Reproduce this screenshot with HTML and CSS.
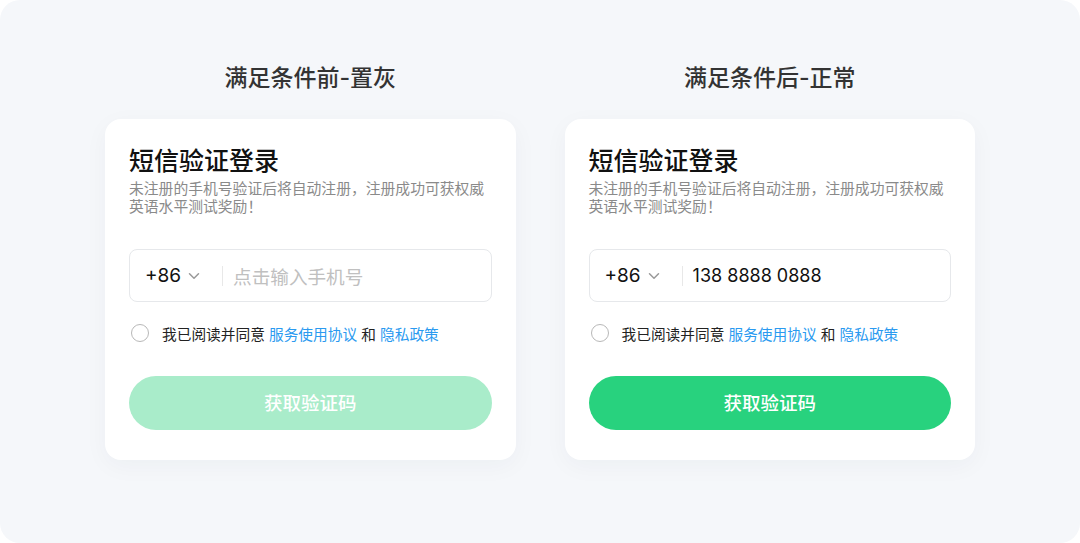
FILE: index.html
```html
<!DOCTYPE html>
<html lang="zh-CN">
<head>
    <meta charset="UTF-8">
    <meta name="viewport" content="width=device-width, initial-scale=1.0">
    <title>短信验证登录 - 按钮状态</title>
    <link rel="stylesheet" href="styles.css">
</head>
<body>

<div class="board">
    <div class="col">
        <h2 class="col-title">满足条件前-置灰</h2>
        <div class="card">
            <h1 class="card-title">短信验证登录</h1>
            <p class="card-desc">未注册的手机号验证后将自动注册，注册成功可获权威英语水平测试奖励！</p>
            <div class="phone-box">
                <span class="code">+86</span>
                <svg class="arrow" width="12" height="8" viewBox="0 0 12 8"><path d="M1.5 1.8 6 6.2 10.5 1.8" fill="none" stroke="#999" stroke-width="1.5" stroke-linecap="round" stroke-linejoin="round"/></svg>
                <span class="sep"></span>
                <span class="phone placeholder">点击输入手机号</span>
            </div>
            <div class="agree">
                <span class="radio"></span>
                <span>我已阅读并同意 <a href="#">服务使用协议</a> 和 <a href="#">隐私政策</a></span>
            </div>
            <a href="#" class="btn disabled">获取验证码</a>
        </div>
    </div>

    <div class="col">
        <h2 class="col-title">满足条件后-正常</h2>
        <div class="card">
            <h1 class="card-title">短信验证登录</h1>
            <p class="card-desc">未注册的手机号验证后将自动注册，注册成功可获权威英语水平测试奖励！</p>
            <div class="phone-box">
                <span class="code">+86</span>
                <svg class="arrow" width="12" height="8" viewBox="0 0 12 8"><path d="M1.5 1.8 6 6.2 10.5 1.8" fill="none" stroke="#999" stroke-width="1.5" stroke-linecap="round" stroke-linejoin="round"/></svg>
                <span class="sep"></span>
                <span class="phone">138 8888 0888</span>
            </div>
            <div class="agree">
                <span class="radio"></span>
                <span>我已阅读并同意 <a href="#">服务使用协议</a> 和 <a href="#">隐私政策</a></span>
            </div>
            <a href="#" class="btn">获取验证码</a>
        </div>
    </div>
</div>

</body>
</html>
```

FILE: styles.css
```css
body {
    margin: 0;
    padding: 0;
    background-color: #ffffff;
    font-family: "Inter", "Noto Sans CJK SC", sans-serif;
}
.board {
    width: 1080px;
    height: 543px;
    box-sizing: border-box;
    background-color: #f5f7fa;
    border-radius: 20px;
    padding: 0 105px;
    display: flex;
    gap: 49px;
}
.col {
    flex: 1;
    display: flex;
    flex-direction: column;
}
.col-title {
    margin: 61px 0 0;
    height: 34px;
    line-height: 34px;
    text-align: center;
    font-size: 23px;
    font-weight: 500;
    color: #333333;
}
.card {
    margin-top: 24px;
    background-color: #ffffff;
    border-radius: 16px;
    padding: 25px 24px 30px;
    box-shadow: 0 6px 24px rgba(30, 40, 80, 0.04);
}
.card-title {
    margin: 0;
    font-size: 25px;
    line-height: 34px;
    font-weight: 500;
    color: #111111;
}
.card-desc {
    margin: 2px 0 0;
    font-size: 14.8px;
    line-height: 18px;
    color: #8a8a8a;
}
.phone-box {
    margin-top: 33px;
    height: 53px;
    box-sizing: border-box;
    border: 1px solid #e6e8eb;
    border-radius: 8px;
    padding: 0 15px;
    display: flex;
    align-items: center;
}
.code {
    font-size: 19px;
    color: #111111;
}
.arrow {
    margin-left: 7px;
}
.sep {
    width: 1px;
    height: 20px;
    background-color: #e8e8e8;
    margin: 0 10px 0 22px;
}
.phone {
    font-size: 18px;
    color: #111111;
}
.phone.placeholder {
    font-size: 18.6px;
    color: #c0c0c0;
}
.agree {
    margin-top: 20px;
    height: 22px;
    display: flex;
    align-items: center;
    font-size: 14.7px;
    color: #222222;
}
.agree a {
    color: #2a9af0;
    text-decoration: none;
}
.radio {
    width: 16px;
    height: 16px;
    border: 1.6px solid #b8b8b8;
    border-radius: 50%;
    margin: 0 13px 0 2px;
}
.btn {
    display: block;
    margin-top: 32px;
    height: 54px;
    line-height: 54px;
    border-radius: 27px;
    background-color: #28d27e;
    color: #ffffff;
    text-align: center;
    text-decoration: none;
    font-size: 18.5px;
    font-weight: 500;
}
.btn.disabled {
    background-color: #a9ecca;
}
```
